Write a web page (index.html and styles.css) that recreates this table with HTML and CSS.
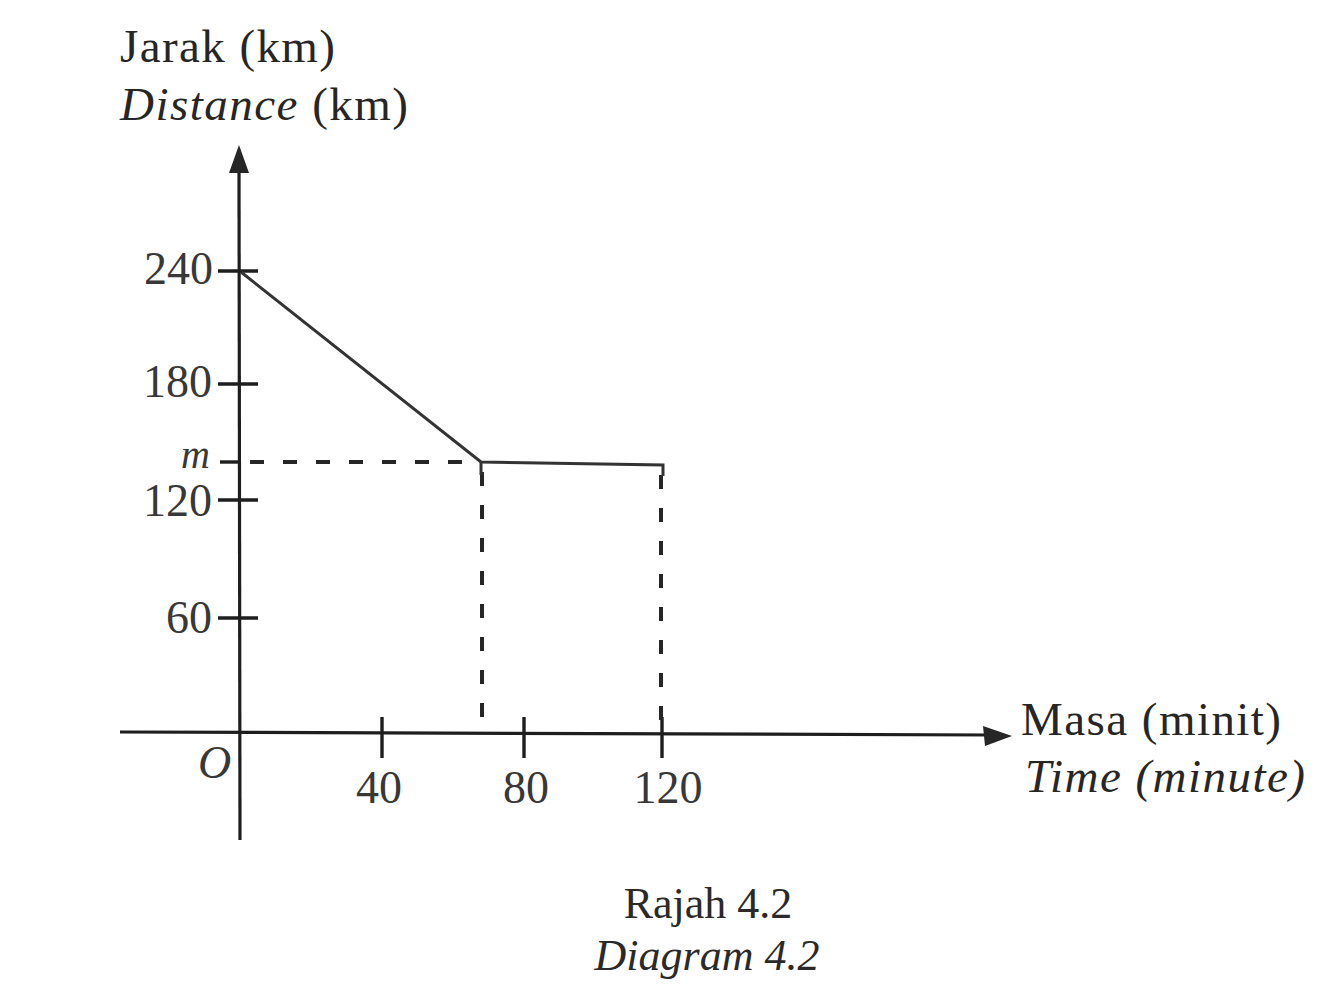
FILE: index.html
```html
<!DOCTYPE html>
<html lang="ms">
<head>
<meta charset="utf-8">
<title>Rajah 4.2 / Diagram 4.2</title>
<link rel="stylesheet" href="styles.css">
</head>
<body>
<figure class="figure">
<svg class="chart" width="1342" height="1004" viewBox="0 0 1342 1004" xmlns="http://www.w3.org/2000/svg">
  <!-- axis titles -->
  <text class="label" x="120" y="62" textLength="215" lengthAdjust="spacing">Jarak (km)</text>
  <text class="label" x="120" y="120" textLength="288" lengthAdjust="spacing"><tspan class="it">Distance</tspan> (km)</text>
  <text class="label" x="1021" y="735" textLength="260" lengthAdjust="spacing">Masa (minit)</text>
  <text class="label it" x="1025" y="792" textLength="280" lengthAdjust="spacing">Time (minute)</text>

  <!-- y axis -->
  <line class="axis" x1="239" y1="168" x2="240" y2="840"/>
  <polygon class="head" points="239,145 229,173 249,173"/>
  <!-- x axis -->
  <line class="axis" x1="120" y1="732" x2="990" y2="735"/>
  <polygon class="head" points="1012,736 983,726 985,746"/>

  <!-- y ticks -->
  <line class="tick" x1="218" y1="271" x2="258" y2="271"/>
  <line class="tick" x1="218" y1="384" x2="258" y2="384"/>
  <line class="tick" x1="220" y1="462" x2="240" y2="462"/>
  <line class="tick" x1="218" y1="500" x2="258" y2="500"/>
  <line class="tick" x1="218" y1="618" x2="258" y2="618"/>

  <!-- x ticks -->
  <line class="tick" x1="382" y1="717" x2="382" y2="758"/>
  <line class="tick" x1="524" y1="717" x2="524" y2="758"/>
  <line class="tick" x1="662" y1="717" x2="662" y2="758"/>

  <!-- y labels -->
  <text class="num" x="213" y="284" text-anchor="end">240</text>
  <text class="num" x="212" y="397" text-anchor="end">180</text>
  <text class="num it small" x="210" y="468" text-anchor="end">m</text>
  <text class="num" x="212" y="516" text-anchor="end">120</text>
  <text class="num" x="212" y="633" text-anchor="end">60</text>

  <!-- x labels -->
  <text class="num it" x="198" y="778">O</text>
  <text class="num" x="379" y="803" text-anchor="middle">40</text>
  <text class="num" x="526" y="803" text-anchor="middle">80</text>
  <text class="num" x="668" y="803" text-anchor="middle">120</text>

  <!-- dashed guides -->
  <line class="dash" x1="250" y1="462" x2="478" y2="462"/>
  <line class="dash" x1="482" y1="472" x2="482" y2="732"/>
  <line class="dash" x1="661" y1="475" x2="661" y2="734"/>

  <!-- graph -->
  <polyline class="graph" points="241,272 481,462 663,465 663,476"/>
  <line class="graph" x1="481" y1="462" x2="481" y2="475"/>

  <!-- caption -->
  <text class="caption" x="708" y="918" text-anchor="middle">Rajah 4.2</text>
  <text class="caption it" x="707" y="970" text-anchor="middle">Diagram 4.2</text>
</svg>
</figure>
</body>
</html>
```
FILE: styles.css
```css
html, body {
  margin: 0;
  padding: 0;
  background: #ffffff;
}

.figure {
  margin: 0;
  width: 1342px;
  height: 1004px;
  overflow: hidden;
}

.chart {
  display: block;
}

.chart text {
  font-family: "Liberation Serif", "Times New Roman", serif;
}

.label {
  font-size: 47px;
  fill: #262626;
}

.num {
  font-size: 46px;
  fill: #383838;
}

.small {
  font-size: 40px;
}

.caption {
  font-size: 44px;
  fill: #2a2a2a;
}

.it {
  font-style: italic;
}

.axis {
  stroke: #1e1e1e;
  stroke-width: 3.2;
  fill: none;
}

.head {
  fill: #262626;
}

.tick {
  stroke: #1e1e1e;
  stroke-width: 3.4;
}

.dash {
  stroke: #262626;
  stroke-width: 4;
  stroke-dasharray: 14 19;
}

.graph {
  stroke: #333333;
  stroke-width: 3;
  fill: none;
  stroke-linejoin: miter;
}
```
